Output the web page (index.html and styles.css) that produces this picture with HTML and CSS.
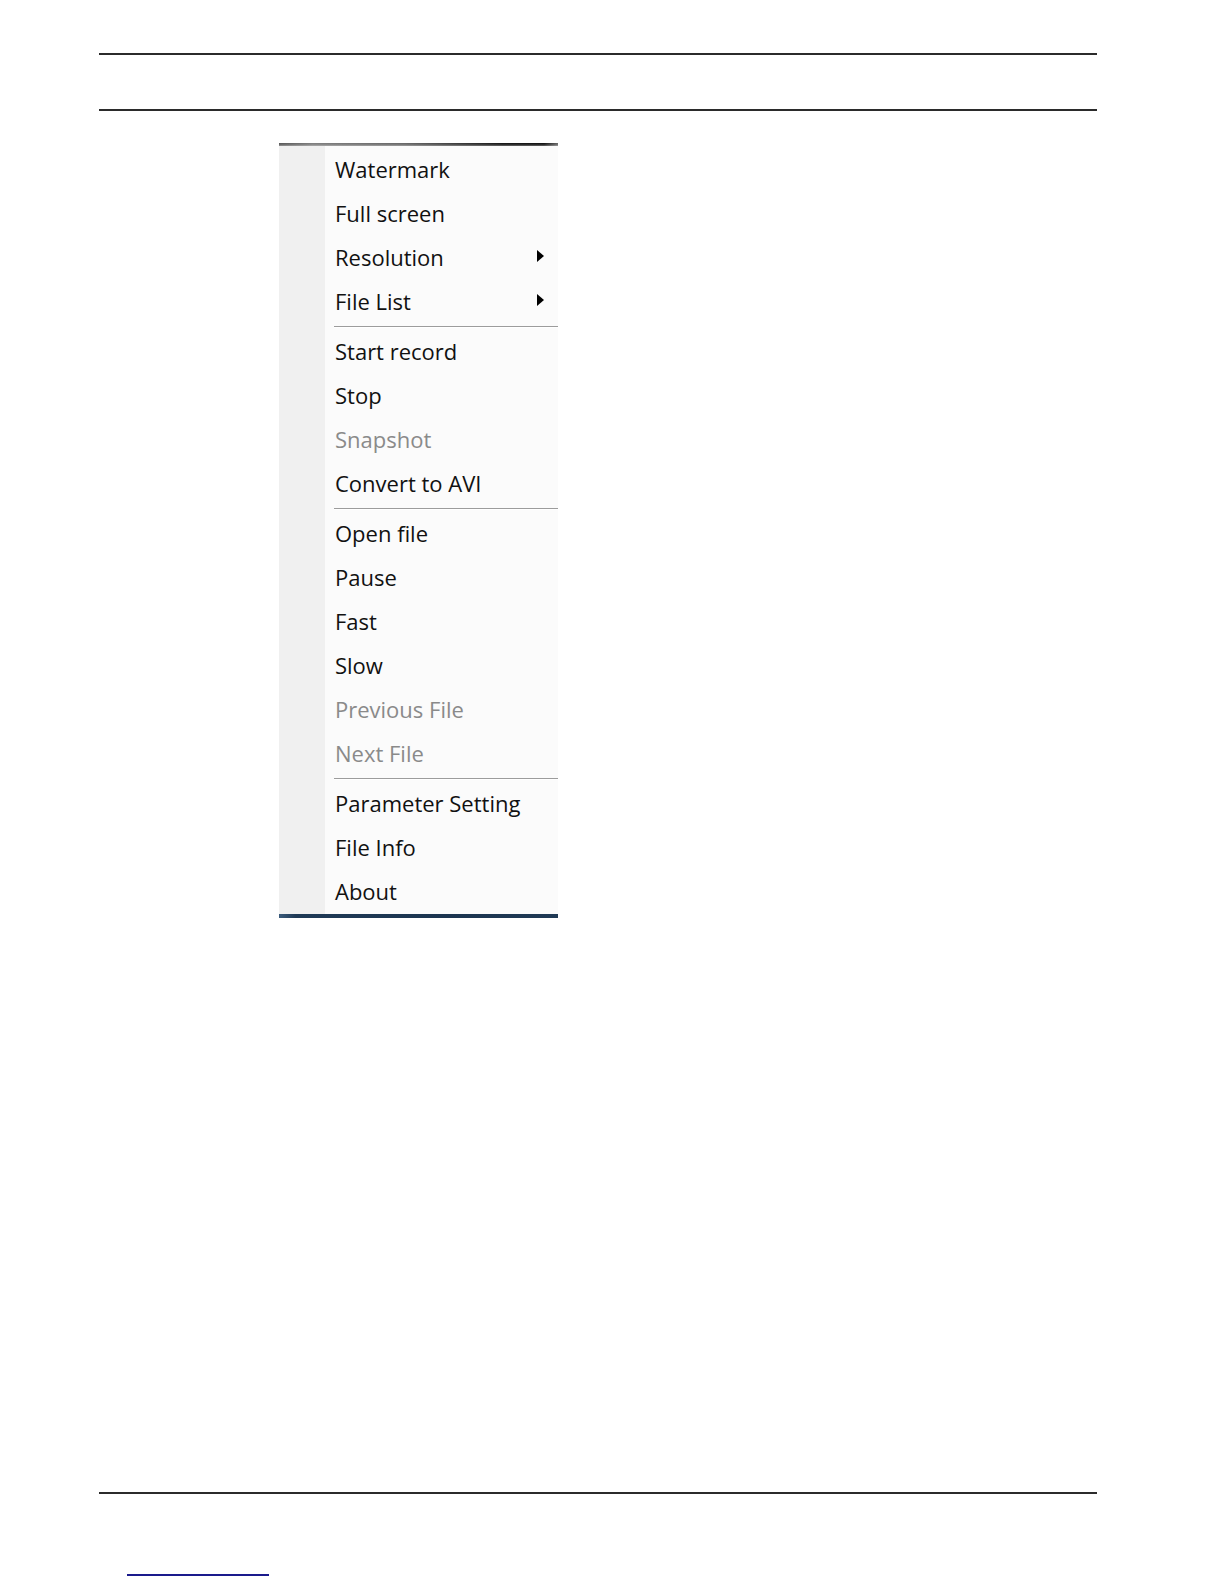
FILE: index.html
```html
<!DOCTYPE html>
<html lang="en">
<head>
<meta charset="utf-8">
<title>Context menu</title>
<link rel="stylesheet" href="styles.css">
</head>
<body>
<div class="page">
  <header class="header">
    <div class="rule"></div>
    <div class="rule rule-second"></div>
  </header>

  <div class="menu">
    <div class="menu-edge-top"></div>
    <ul class="menu-list">
      <li class="item">Watermark</li>
      <li class="item">Full screen</li>
      <li class="item has-sub">Resolution<span class="arrow"></span></li>
      <li class="item has-sub">File List<span class="arrow"></span></li>
      <li class="sep"></li>
      <li class="item">Start record</li>
      <li class="item">Stop</li>
      <li class="item disabled">Snapshot</li>
      <li class="item">Convert to AVI</li>
      <li class="sep"></li>
      <li class="item">Open file</li>
      <li class="item">Pause</li>
      <li class="item">Fast</li>
      <li class="item">Slow</li>
      <li class="item disabled">Previous File</li>
      <li class="item disabled">Next File</li>
      <li class="sep"></li>
      <li class="item">Parameter Setting</li>
      <li class="item">File Info</li>
      <li class="item">About</li>
    </ul>
    <div class="menu-edge-bottom"></div>
  </div>

  <footer class="footer">
    <div class="rule"></div>
    <div class="footer-link"></div>
  </footer>
</div>
</body>
</html>
```

FILE: styles.css
```css
html, body {
  margin: 0;
  padding: 0;
  background: #ffffff;
}

.page {
  width: 998px;
  height: 1584px;
  margin-left: 99px;
  display: flex;
  flex-direction: column;
  box-sizing: border-box;
}

.header {
  padding-top: 53px;
  display: flex;
  flex-direction: column;
}

.rule {
  height: 2px;
  background: #2b2b2b;
}

.rule-second {
  margin-top: 54px;
}

.menu {
  margin-top: 32px;
  margin-left: 180px;
  width: 279px;
  display: flex;
  flex-direction: column;
  background: linear-gradient(to right, #f0f0f0 0, #f0f0f0 46px, #fbfbfb 46px);
  font-family: "Open Sans", "Noto Sans", "DejaVu Sans", sans-serif;
  font-size: 22px;
  color: #111111;
}

.menu-edge-top {
  height: 3px;
  background: linear-gradient(to bottom, rgba(255,255,255,0) 0, rgba(255,255,255,0) 33%, rgba(255,255,255,0.35) 100%),
              linear-gradient(to right, #5a5a5a 0, #808080 12%, #6a6a6a 45%, #1a1a1a 80%, #151515 95%, #6a6a6a 100%);
}

.menu-list {
  list-style: none;
  margin: 0;
  padding: 1px 0 1px 0;
}

.item {
  height: 44px;
  display: flex;
  align-items: center;
  padding-left: 56px;
  padding-right: 14px;
  box-sizing: border-box;
  white-space: nowrap;
}

.item.has-sub {
  justify-content: space-between;
}

.item.disabled {
  color: #8a8a8a;
}

.arrow {
  width: 0;
  height: 0;
  border-left: 7px solid #000000;
  border-top: 6px solid transparent;
  border-bottom: 6px solid transparent;
  margin-top: -3px;
}

.sep {
  height: 6px;
  margin-left: 55px;
  box-sizing: border-box;
  padding-top: 3px;
}

.sep::before {
  content: "";
  display: block;
  height: 1px;
  background: #9c9c9c;
  border-bottom: 1px solid #ffffff;
}

.menu-edge-bottom {
  height: 4px;
  background: linear-gradient(to right, #3c5c7c 0, #1f3a56 6%, #1c3550 60%, #203a55 100%);
}

.footer {
  margin-top: auto;
  padding-bottom: 8px;
  display: flex;
  flex-direction: column;
}

.footer .rule {
  margin-bottom: 80px;
}

.footer-link {
  margin-left: 28px;
  width: 142px;
  height: 2px;
  background: #1a1a8c;
}
```
